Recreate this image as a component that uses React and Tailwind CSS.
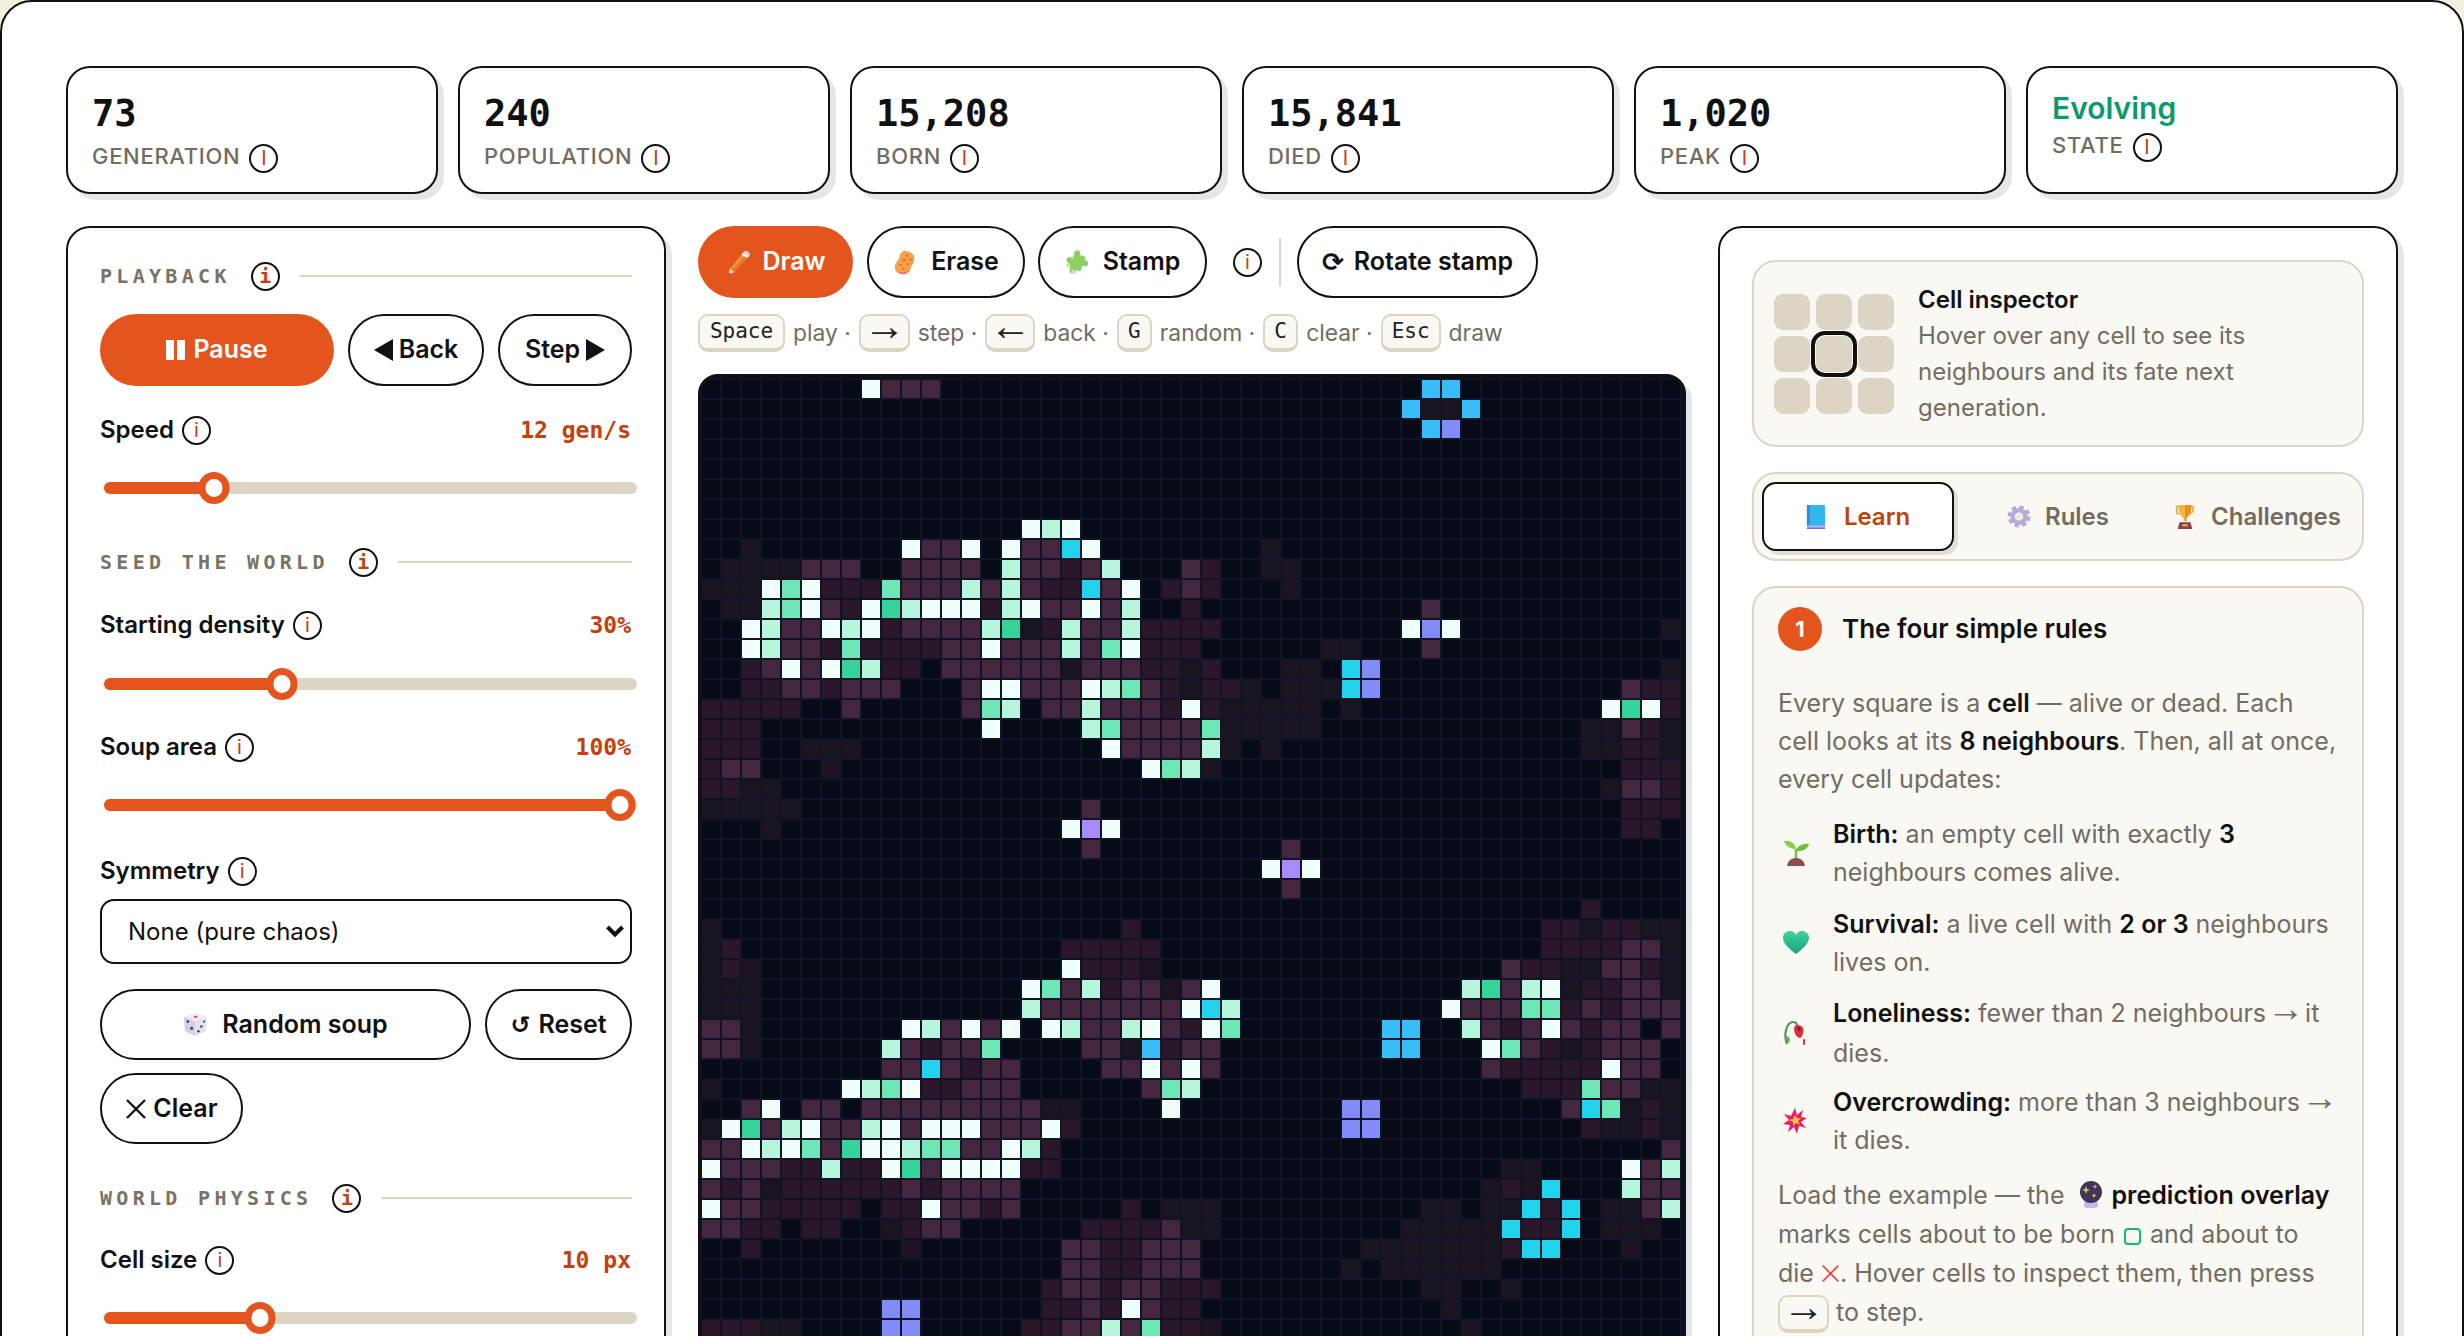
import React from "react";

const MONO = "font-['DejaVu_Sans_Mono',monospace]";
const ARROW = "font-['Liberation_Serif',serif]";

const COLORS = {
  W: "#effffa", L: "#b6f7dc", M: "#6ee7b7", G: "#34d399", C: "#22d3ee", B: "#38bdf8",
  I: "#818cf8", P: "#a78bfa", D: "#45263f", E: "#2a1729", F: "#1a1320",
};

const ROWS = {
  0: "8W 9D 10D 11D|11B 12B",
  1: "|10B 11F 12F 13B",
  2: "|11B 12I",
  7: "16W 17L 18W",
  8: "2F 10W 11D 12D 13W 15W 16D 17D 18C 19W|3F",
  9: "1F 2F 3F 4F 5D 6D 7D 10D 11D 12D 13D 15L 16D 17D 18E 19D 20L 24D|0E 3F 4F",
  10: "0F 1F 2F 3W 4M 5W 6E 7E 8E 9M 10D 11D 12D 13L 14D 15L 16D 17E 18E 19C 20D 21W 23E 24D|0E 4F",
  11: "1F 2F 3L 4M 5W 6D 7E 8W 9G 10L 11W 12W 13W 14E 15L 16W 17D 18D 19W 20D 21L 24E|11D",
  12: "2W 3L 4D 5D 6W 7L 8W 9E 10D 11D 12D 13D 14L 15G 16F 17E 18L 19D 20D 21L 22E 23E 24E|0E 10W 11I 12W 23F",
  13: "2W 3L 4D 5D 6E 7M 8E 9E 10E 11E 12D 13D 14W 15D 16D 17D 18L 19D 20M 21W 22E 23E 24E|6F 7F 11D",
  14: "2E 3D 4W 5D 6W 7G 8L 9E 10E 12D 13D 14D 15D 16D 17D 18F 19D 20D 21D 22E 23E 24F|0E 4F 5F 7C 8I 23F",
  15: "2E 3E 4D 5D 6E 7D 8D 9D 13D 14W 15W 16D 17D 18D 19W 20L 21M 22D 23E 24F|0E 1E 2F 4F 5F 6F 7C 8I 21D 22E 23E",
  16: "0E 1E 2E 3E 4E 7D 13D 14M 15L 17D 18D 19L 20D 21D 22D 23E 24W|0E 1F 2F 3F 4F 5F 7F 20W 21G 22W 23E",
  17: "0E 1E 2E 14W 19L 20M 21D 22D 23D 24D|0M 1F 2F 3F 4F 5F 19F 20F 21D 22E 23F",
  18: "0E 1E 2E 5F 6F 7F 20W 21D 22D 23D 24D|0L 1F 3F 19F 20F 21E 22E 23F",
  19: "0E 1D 2D 6F 22W 23M 24L|0F 21E 22E 23E",
  20: "0E 1E 2F 3F|20F 21D 22D 23E",
  21: "0F 1F 2F 3F 4F 19D|21E 22E 23E",
  22: "3F 18W 19P 20W|21E 22E",
  23: "19D|4D",
  24: "|3W 4P 5W",
  25: "|4D",
  26: "|19E",
  27: "0F 21E|17E 18E 19F 20E 21E 22F 23F",
  28: "0F 1E 18E 19E 20E 21E 22E|17E 18E 19E 20E 21D 22D 23F",
  29: "0F 1E 2F 18W 19E 20E 21E 22F|15D 16E 17E 18F 19F 20D 21D 22E 23F",
  30: "0F 1F 2F 16W 17M 18D 19L 20E 21D 22D 23F 24D|0W 13L 14G 15D 16L 17W 18F 19E 20E 21D 22D 23F",
  31: "0F 1F 2F 16L 17D 18D 19D 20D 21D 22D 23D 24W|0C 1L 12W 13D 14D 15D 16M 17M 18E 19D 20E 21D 22D 23D",
  32: "0D 1D 2F 10W 11L 12D 13W 14D 15W 17W 18L 19D 20D 21L 22W 23D 24E|0W 1M 9B 10B 13L 14D 15E 16D 17W 18D 19E 20D 21D 23D",
  33: "0D 1D 2F 9L 10D 11E 12D 13D 14M 19D 20D 21F 22B 23E 24D|0D 9B 10B 14W 15M 16D 17E 18F 19E 20D 21D 22D",
  34: "9D 10D 11C 12D 13E 14D 15D 20D 21D 22W 23D 24W|0D 14D 15E 16E 17E 18E 19E 20W 21D 22D",
  35: "0F 7W 8L 9M 10W 11E 12E 13D 14D 15D 22D 23M 24L|16E 17E 18E 19M 20D 21D 22F 23F",
  36: "2D 3W 5D 6D 8D 9D 10D 11D 12D 13D 14D 15D 16D 17F 18F 23W|7I 8I 18D 19C 20M 21F 22E 23F",
  37: "0F 1W 2G 3D 4L 5W 6D 7D 8L 9W 10D 11W 12W 13W 14D 15D 16D 17W 18E|7I 8I 19E 20F 21F 22E 23F",
  38: "0D 1D 2W 3L 4W 5M 6D 7G 8W 9W 10L 11M 12M 13D 14D 15W 16L 17E|23D",
  39: "0W 1D 2D 3D 4E 5E 6L 7E 8E 9W 10G 11D 12W 13W 14W 15W 16E 17E|15F 16F 21W 22D 23L",
  40: "0D 1E 2D 3F 4E 5E 6E 7E 8E 9E 10D 11E 12D 13D 14D 15D|14F 15E 16F 17C 21L 22D 23D",
  41: "0W 1D 2D 3E 4E 5E 6E 7E 9E 10E 11W 12D 13D 14E 15D 21E 23F 24F|0F 11F 12F 14F 15F 16C 17E 18C 20F 21F 22D 23L",
  42: "0D 1D 2E 3E 5E 6E 9F 10E 11D 12D 19E 20E 21E 22E 23D 24F|0F 10F 11F 12F 13F 14F 15C 16E 17E 18C 20F 21F 22F",
  43: "2E 10F 18D 19D 20E 21E 22D 23D 24D|8F 9F 10F 11F 12F 13F 14F 15E 16C 17C 21F",
  44: "18D 19D 20E 21E 22D 23D 24D|7F 9F 10F 11F 12F 13F 14F",
  45: "17E 18D 19D 20E 21D 22D 23E 24E|0E 11F 12F 15F",
  46: "9I 10I 17E 18E 19D 20E 21W 22D 23E 24E|12F",
  47: "0E 1E 2E 3F 4F 9I 10I 16E 17E 18D 19D 20L 21D 22M 23E 24E|0F 13F",
};

function cells() {
  const out = [];
  for (const [r, s] of Object.entries(ROWS)) {
    const [a, b = ""] = s.split("|");
    const push = (str, off) => {
      for (const t of str.split(" ")) {
        const m = t.match(/^(\d+)([A-Z])$/);
        if (m) out.push([Number(r), Number(m[1]) + off, COLORS[m[2]]]);
      }
    };
    push(a, 0);
    push(b, 25);
  }
  return out;
}

function LifeGrid() {
  const cols = Array.from({ length: 50 });
  const rows = Array.from({ length: 49 });
  return (
    <svg width="982" height="980" className="block">
      {cols.map((_, i) => (
        <rect key={"v" + i} x={-1 + 20 * i} y="0" width="2" height="980" fill="#0f1427" />
      ))}
      {rows.map((_, i) => (
        <rect key={"h" + i} x="0" y={1 + 20 * i} width="982" height="2" fill="#0f1427" />
      ))}
      {cells().map(([r, c, f]) => (
        <rect key={r + "-" + c} x={1 + 20 * c} y={3 + 20 * r} width="18" height="18" fill={f} />
      ))}
    </svg>
  );
}

function Info({ mono }) {
  return (
    <span
      className={`inline-flex h-[29px] w-[29px] shrink-0 items-center justify-center rounded-full border-2 border-[#111] text-[20px] leading-none tracking-normal text-[#c2410c] ${
        mono ? MONO + " font-bold" : "font-normal"
      }`}
    >
      i
    </span>
  );
}

function Stat({ value, label }) {
  return (
    <div className="h-[128px] rounded-[24px] border-2 border-[#111] bg-white px-[24px] pt-[26px] shadow-[6px_6px_0_rgba(0,0,0,0.1)]">
      <div className={`${MONO} h-[40px] text-[37px] font-bold leading-[40px] text-[#111]`}>{value}</div>
      <div className="mt-[9px] flex h-[30px] items-center gap-[9px] text-[22px] font-medium uppercase tracking-[0.7px] text-[#736c60]">
        <span className="-mt-[3px]">{label}</span>
        <Info />
      </div>
    </div>
  );
}

function StateCard() {
  return (
    <div className="h-[128px] rounded-[24px] border-2 border-[#111] bg-white px-[24px] pt-[20px] shadow-[6px_6px_0_rgba(0,0,0,0.1)]">
      <div className="h-[40px] text-[30px] font-semibold leading-[40px] text-[#0a9a6d]">Evolving</div>
      <div className="mt-[4px] flex h-[30px] items-center gap-[9px] text-[22px] font-medium uppercase tracking-[0.7px] text-[#736c60]">
        <span className="-mt-[3px]">State</span>
        <Info />
      </div>
    </div>
  );
}

function Section({ title, className = "" }) {
  return (
    <div className={`flex h-[32px] items-center gap-[20px] ${className}`}>
      <span className={`${MONO} whitespace-pre text-[20px] font-bold uppercase tracking-[4.3px] text-[#7a7263]`}>{title}</span>
      <Info mono />
      <span className="h-[2px] flex-1 bg-[#ddd5c3]" />
    </div>
  );
}

function Field({ label, value, className = "" }) {
  return (
    <div className={`flex h-[30px] items-center justify-between ${className}`}>
      <span className="flex items-center gap-[8px] text-[24px] font-semibold leading-none text-[#111]">
        {label} <Info />
      </span>
      {value && <span className={`${MONO} -ml-[2px] mr-[1px] whitespace-pre text-[23px] font-bold text-[#c2410c]`}>{value}</span>}
    </div>
  );
}

function Slider({ at, className = "" }) {
  return (
    <div className={`relative ml-[4px] -mr-[5px] flex h-[30px] items-center ${className}`}>
      <div className="h-[12px] w-full rounded-full bg-[#ddd5c3]" />
      <div className="absolute left-0 top-[9px] h-[12px] rounded-full bg-[#e4551e]" style={{ width: at }} />
      <div
        className="absolute top-[-1px] h-[32px] w-[31px] -translate-x-1/2 rounded-full border-[7px] border-[#e4551e] bg-white"
        style={{ left: at }}
      />
    </div>
  );
}

function Btn({ children, className = "" }) {
  return (
    <button className={`flex items-center justify-center rounded-full border-2 border-[#111] bg-white text-[25px] font-semibold text-[#111] ${className}`}>
      {children}
    </button>
  );
}

function Kbd({ children, className = "" }) {
  return (
    <span className={`inline-flex h-[38px] items-center justify-center rounded-[10px] border-2 border-b-[4px] border-[#ddd5c3] bg-[#faf8f3] px-[10px] text-[#222] ${className}`}>
      {children}
    </span>
  );
}

const Tri = ({ left }) => (
  <svg width="19" height="22" viewBox="0 0 19 22">
    <polygon points={left ? "19,0 19,22 0,11" : "0,0 0,22 19,11"} fill="#111" />
  </svg>
);

const XIcon = ({ size = 22, color = "#111", sw = 2.4 }) => (
  <svg width={size} height={size} viewBox="0 0 22 22" fill="none" stroke={color} strokeWidth={sw}>
    <path d="M2 2 L20 20 M20 2 L2 20" />
  </svg>
);

const Pencil = () => (
  <svg width="25" height="25" viewBox="0 0 26 32" preserveAspectRatio="none">
    <path d="M5 24 L18 5 L24 9 L10 28 Z" fill="#f4924c" />
    <path d="M10 28 L24 9 L21 7 L7 26 Z" fill="#e9762f" />
    <path d="M17 6 L20 1.5 Q22 0 24 2 L26 5 Q26 7 25 8 L23 10 Z" fill="#f7c4c4" />
    <path d="M17 6.5 L19 3.5 L25 7.5 L23 10 Z" fill="#fff" opacity=".85" />
    <path d="M5 24 L10 28 L3.5 31.5 Z" fill="#f6d2a8" />
    <path d="M3.8 29 L5.5 30.5 L3.2 31.8 Z" fill="#5b3f6e" />
  </svg>
);

const Sponge = () => (
  <svg width="24" height="25" viewBox="0 0 26 32" preserveAspectRatio="none">
    <path d="M13 1 C19 2 23 5 23 11 C23 17 20 20 19 24 C18 28 15 31 11 31 C6 31 2 27 2 22 C2 16 6 14 7 9 C8 4 10 1 13 1 Z" fill="#f5a14a" />
    <path d="M4 26 C8 30 14 29 18 25 C17 29 14 31 11 31 C8 31 5 29 4 26 Z" fill="#f2737a" />
    <g fill="#d9752a">
      <circle cx="15" cy="7" r="1.4" /><circle cx="19" cy="12" r="1.4" /><circle cx="12" cy="13" r="1.6" />
      <circle cx="16" cy="18" r="1.5" /><circle cx="8" cy="19" r="1.4" /><circle cx="11" cy="24" r="1.3" />
    </g>
  </svg>
);

const PuzzleIcon = () => (
  <svg width="24" height="25" viewBox="0 0 26 30" preserveAspectRatio="none">
    <path d="M11 1 C14 -1 18 2 16 6 L22 8 C23 9 22 12 20 12 C22 11 26 13 25 17 C24 20 21 20 19 19 L17 25 C16 26 13 25 13 23 C14 26 11 30 7 28 C4 27 5 24 6 22 L2 20 C1 18 3 15 5 16 C2 15 0 11 3 9 C5 8 7 9 8 10 L10 5 C10 3 10 2 11 1 Z" fill="#8fcf5f" />
    <path d="M13 23 C14 26 11 30 7 28 C9 27 11 25 13 23 Z M6 22 L2 20 C2 18 4 16 5 16 Z" fill="#cfe8c0" />
    <circle cx="9" cy="26" r="2.4" fill="#cfd8dc" />
  </svg>
);

const Die = () => (
  <svg width="25" height="25" viewBox="0 0 26 26">
    <polygon points="13,1 25,5 13,10 1,5" fill="#efeaf2" />
    <polygon points="1,5 13,10 13,25 2,20" fill="#d5cfe0" />
    <polygon points="25,5 13,10 13,25 24,20" fill="#e6e1ec" />
    <ellipse cx="13" cy="5" rx="2" ry="1.2" fill="#e8436a" />
    <g fill="#4b3a8a">
      <circle cx="5" cy="10" r="1.5" /><circle cx="9" cy="17" r="1.6" /><circle cx="16" cy="20" r="1.4" />
      <circle cx="19" cy="15" r="1.3" /><circle cx="22" cy="10" r="1.2" />
    </g>
  </svg>
);

const Book = () => (
  <svg width="20" height="24" viewBox="0 0 22 34" preserveAspectRatio="none">
    <rect x="1" y="0" width="20" height="30" rx="1.5" fill="#33b5ee" />
    <rect x="1" y="0" width="3" height="30" fill="#2b8fd1" />
    <rect x="1" y="29" width="20" height="4" fill="#b9b4ec" />
    <rect x="1" y="32" width="20" height="2" fill="#6f74d8" />
  </svg>
);

const Gear = () => (
  <svg width="24" height="23" viewBox="0 0 26 26" preserveAspectRatio="none">
    <circle cx="13" cy="13" r="10" fill="none" stroke="#b7aad6" strokeWidth="5" strokeDasharray="4.6 3.25" />
    <circle cx="13" cy="13" r="7" fill="none" stroke="#b7aad6" strokeWidth="5" />
    <circle cx="13" cy="13" r="3" fill="#ece7d8" />
  </svg>
);

const Trophy = () => (
  <svg width="20" height="24" viewBox="0 0 22 36" preserveAspectRatio="none">
    <path d="M2 2 H20 V7 C20 11 17 13 15 13 L2 13 C2 11 2 7 2 2 Z" fill="none" stroke="#f4a93a" strokeWidth="2" />
    <path d="M4 0 H18 C18 8 17 16 12.5 19 V24 H9.5 V19 C5 16 4 8 4 0 Z" fill="#f5b544" />
    <path d="M11 0 H18 C18 8 17 16 12.5 19 V24 H11 Z" fill="#e98f25" />
    <path d="M5 26 H17 L19 36 H3 Z" fill="#8a3d55" />
    <rect x="8" y="29" width="6" height="3" fill="#f5b544" />
  </svg>
);

const Seedling = () => (
  <svg width="26" height="26" viewBox="0 0 26 26">
    <path d="M13 19 V9" stroke="#6fbf3a" strokeWidth="2.4" />
    <path d="M13 9 C8 9 3 7 1 1 C7 0 12 3 13 9 Z" fill="#86d14a" />
    <path d="M13 11 C14 6 20 3 26 4 C25 9 19 12 13 11 Z" fill="#6fbf3a" />
    <path d="M4 26 C5 20 9 18 13 18 C17 18 21 20 22 26 Z" fill="#8f4d4d" />
  </svg>
);

const Heart = () => (
  <svg width="26" height="24" viewBox="0 0 26 24">
    <defs>
      <linearGradient id="hg" x1="0" y1="0" x2="0" y2="1">
        <stop offset="0" stopColor="#3ed39a" />
        <stop offset="1" stopColor="#18a184" />
      </linearGradient>
    </defs>
    <path d="M13 23 C8 19 0 13 0 7 C0 2 4 0 7 0 C10 0 12 2 13 4 C14 2 16 0 19 0 C22 0 26 2 26 7 C26 13 18 19 13 23 Z" fill="url(#hg)" />
  </svg>
);

const Wilted = () => (
  <svg width="24" height="26" viewBox="0 0 24 26">
    <path d="M4 24 C0 14 4 2 10 2 C13 2 14 4 14 6" fill="none" stroke="#4f9a58" strokeWidth="2.2" />
    <path d="M3 16 C6 16 8 19 6 23 C3 22 2 19 3 16 Z" fill="#5fb05e" />
    <path d="M11 8 C12 4 18 4 20 8 C21 12 20 16 17 18 C14 18 11 14 11 8 Z" fill="#d7303f" />
    <path d="M14 7 C16 6 18 8 18 11 C16 12 14 10 14 7 Z" fill="#8f1c2e" />
    <rect x="20" y="19" width="2" height="6" rx="1" fill="#d7303f" />
  </svg>
);

const Boom = () => (
  <svg width="24" height="26" viewBox="0 0 24 26">
    <polygon points="12,0 14,7 20,2 18,9 24,10 18,14 23,20 16,18 14,26 11,19 5,24 7,17 0,16 6,12 1,6 8,8" fill="#ea1f63" />
    <polygon points="12,7 14,10 18,10 15,13 17,17 13,15 10,18 10,14 6,12 10,11" fill="#f9c23c" />
  </svg>
);

const Ball = () => (
  <svg width="24" height="28" viewBox="0 0 24 28">
    <rect x="5" y="20" width="14" height="7" rx="3" fill="#c9b6e8" />
    <circle cx="12" cy="11" r="11" fill="#3f3557" />
    <path d="M7 5 L8 8 L11 9 L8 10 L7 13 L6 10 L3 9 L6 8 Z" fill="#f5c14e" />
    <path d="M16 3 L16.7 5 L18.5 5.6 L16.7 6.2 L16 8 L15.3 6.2 L13.5 5.6 L15.3 5 Z" fill="#e6a3c8" />
    <path d="M15 12 L15.7 14 L17.5 14.6 L15.7 15.2 L15 17 L14.3 15.2 L12.5 14.6 L14.3 14 Z" fill="#f5c14e" />
  </svg>
);

const Arrow = ({ children }) => <span className={`${ARROW} -mx-[6px] align-[1px] text-[37px] leading-[0]`}>{children}</span>;

function Rule({ icon, className = "", children }) {
  return (
    <div className={`flex items-center ${className}`}>
      <span className="flex w-[55px] shrink-0 items-center pl-[5px]">{icon}</span>
      <p>{children}</p>
    </div>
  );
}

const B = ({ children }) => <b className="font-semibold text-[#111]">{children}</b>;

function Inspector() {
  const idx = [0, 1, 2, 3, 4, 5, 6, 7, 8];
  return (
    <div className="flex h-[187px] rounded-[24px] border-2 border-[#ddd5c3] bg-[#faf8f3] pl-[20px] pt-[32px]">
      <div className="grid h-[120px] w-[120px] shrink-0 grid-cols-3 grid-rows-3 gap-[6px]">
        {idx.map((i) => (
          <div
            key={i}
            className={`rounded-[9px] bg-[#ddd5c3] ${i === 4 ? "relative z-10 outline-[4px] outline-[#111] outline-offset-[1px]" : ""}`}
          />
        ))}
      </div>
      <div className="-mt-[12px] ml-[24px]">
        <div className="text-[24px] font-semibold leading-[36px] text-[#111]">Cell inspector</div>
        <div className="text-[24px] leading-[36px] text-[#736c60]">
          Hover over any cell to see its
          <br />
          neighbours and its fate next
          <br />
          generation.
        </div>
      </div>
    </div>
  );
}

function Tabs() {
  return (
    <div className="mt-[25px] grid h-[89px] grid-cols-3 items-center gap-[8px] rounded-[24px] border-2 border-[#ddd5c3] bg-[#faf8f3] px-[8px] text-[24px] font-semibold text-[#736c60]">
      <div className="flex h-[69px] items-center justify-center gap-[18px] rounded-[14px] border-2 border-[#111] bg-white text-[#c2410c] shadow-[4px_4px_0_rgba(0,0,0,0.1)]">
        <Book /> Learn
      </div>
      <div className="flex items-center justify-center gap-[14px]">
        <Gear /> Rules
      </div>
      <div className="flex items-center justify-center gap-[16px]">
        <Trophy /> Challenges
      </div>
    </div>
  );
}

function Lesson() {
  return (
    <div className="mt-[25px] rounded-[24px] border-2 border-[#ddd5c3] bg-[#faf8f3] px-[24px] pb-[40px] pt-[19px] text-[25px] leading-[38px] text-[#736c60]">
      <div className="flex items-center gap-[20px]">
        <span className="flex h-[44px] w-[44px] items-center justify-center rounded-full bg-[#e4551e] text-[22px] font-bold text-white">1</span>
        <span className="text-[26px] font-semibold text-[#111]">The four simple rules</span>
      </div>
      <p className="mt-[33px]">
        Every square is a <B>cell</B> — alive or dead. Each cell looks at its <B>8 neighbours</B>. Then, all at once, every cell updates:
      </p>
      <Rule icon={<Seedling />} className="mt-[17px]">
        <B>Birth:</B> an empty cell with exactly <B>3</B> neighbours comes alive.
      </Rule>
      <Rule icon={<Heart />} className="mt-[14px]">
        <B>Survival:</B> a live cell with <B>2 or 3</B> neighbours lives on.
      </Rule>
      <Rule icon={<Wilted />} className="mt-[12px] leading-[40px]">
        <B>Loneliness:</B> fewer than 2 neighbours <Arrow>→</Arrow> it dies.
      </Rule>
      <Rule icon={<Boom />} className="mt-[10px] whitespace-nowrap">
        <B>Overcrowding:</B> more than 3 neighbours <Arrow>→</Arrow>
        <br />
        it dies.
      </Rule>
      <p className="mt-[17px] leading-[39px]">
        Load the example — the <span className="mx-[8px] inline-block align-[-5px]"><Ball /></span>
        <B>prediction overlay</B> marks cells about to be born{" "}
        <span className="mx-[2px] inline-block h-[17px] w-[17px] rounded-[4px] border-2 border-[#10b981] align-[-2px]" /> and about to die{" "}
        <span className="inline-block align-[-1px]"><XIcon size={19} color="#ef4444" sw={2} /></span>. Hover cells to inspect them, then press{" "}
        <Kbd className={`${ARROW} w-[51px] pb-[12px] align-middle text-[42px] leading-[0]`}>→</Kbd> to step.
      </p>
    </div>
  );
}

export default function App() {
  return (
    <div className="h-[1336px] overflow-hidden bg-[#f5efe2] font-['Inter',sans-serif]">
      <div className="h-[1500px] rounded-[32px] border-2 border-[#111] bg-white p-[64px]">
        <div className="grid grid-cols-6 gap-[20px]">
          <Stat value="73" label="Generation" />
          <Stat value="240" label="Population" />
          <Stat value="15,208" label="Born" />
          <Stat value="15,841" label="Died" />
          <Stat value="1,020" label="Peak" />
          <StateCard />
        </div>

        <div className="mt-[32px] grid grid-cols-[600px_988px_680px] gap-[32px]">
          <aside className="h-[1300px] rounded-[24px] border-2 border-[#111] bg-white px-[32px] pt-[32px] shadow-[6px_6px_0_rgba(0,0,0,0.1)]">
            <Section title="Playback" />
            <div className="mt-[22px] flex gap-[14px]">
              <button className="flex h-[72px] flex-1 items-center justify-center gap-[8px] rounded-full bg-[#e4551e] text-[25px] font-semibold text-white">
                <span className="flex gap-[3px]">
                  <span className="h-[20px] w-[8px] bg-white" />
                  <span className="h-[20px] w-[8px] bg-white" />
                </span>
                Pause
              </button>
              <Btn className="h-[72px] w-[136px] gap-[6px]"><Tri left /> Back</Btn>
              <Btn className="h-[72px] w-[134px] gap-[6px]">Step <Tri /></Btn>
            </div>
            <Field label="Speed" value="12 gen/s" className="mt-[29px]" />
            <Slider at={110} className="mt-[28px]" />

            <Section title="Seed the world" className="mt-[43px]" />
            <Field label="Starting density" value="30%" className="mt-[32px]" />
            <Slider at={178} className="mt-[29px]" />
            <Field label="Soup area" value="100%" className="mt-[33px]" />
            <Slider at={516} className="mt-[28px]" />
            <Field label="Symmetry" className="mt-[36px]" />
            <div className="relative mt-[13px]">
              <select
                defaultValue="none"
                className="h-[65px] w-full appearance-none rounded-[14px] border-2 border-[#111] bg-white pl-[26px] text-[24px] text-[#111]"
              >
                <option value="none">None (pure chaos)</option>
              </select>
              <svg className="pointer-events-none absolute right-[8px] top-[26px]" width="18" height="12" viewBox="0 0 18 12" fill="none" stroke="#111" strokeWidth="4">
                <path d="M1.5 2 L9 9.5 L16.5 2" />
              </svg>
            </div>
            <div className="mt-[25px] flex gap-[14px]">
              <Btn className="h-[71px] flex-1 gap-[14px]"><Die /> Random soup</Btn>
              <Btn className="h-[71px] w-[147px] gap-[8px]">
                <span className="font-['DejaVu_Sans',sans-serif] text-[24px]">↺</span> Reset
              </Btn>
            </div>
            <Btn className="mt-[13px] h-[71px] w-[143px] gap-[6px]"><XIcon /> Clear</Btn>

            <Section title="World physics" className="mt-[38px]" />
            <Field label="Cell size" value="10 px" className="mt-[31px]" />
            <Slider at={156} className="mt-[28px]" />
          </aside>

          <main>
            <div className="flex h-[72px] items-center">
              <button className="flex h-[72px] w-[155px] items-center justify-center gap-[12px] rounded-full bg-[#e4551e] text-[25px] font-semibold text-white">
                <Pencil /> Draw
              </button>
              <Btn className="ml-[14px] h-[72px] w-[158px] gap-[14px]"><Sponge /> Erase</Btn>
              <Btn className="ml-[13px] h-[72px] w-[169px] gap-[14px]"><PuzzleIcon /> Stamp</Btn>
              <span className="ml-[26px]"><Info /></span>
              <span className="ml-[17px] h-[48px] w-[2px] bg-[#ddd5c3]" />
              <Btn className="ml-[16px] h-[72px] w-[241px] gap-[10px]">
                <span className="font-['DejaVu_Sans',sans-serif] text-[26px]">⟳</span> Rotate stamp
              </Btn>
            </div>
            <div className="mt-[16px] flex items-center gap-[8px] text-[22.8px] text-[#736c60]">
              <Kbd className={`${MONO} w-[87px] text-[21px]`}>Space</Kbd>
              <span>play ·</span>
              <Kbd className={`${ARROW} w-[51px] pb-[12px] text-[42px] leading-[0]`}>→</Kbd>
              <span>step ·</span>
              <Kbd className={`${ARROW} w-[50px] pb-[12px] text-[42px] leading-[0]`}>←</Kbd>
              <span>back ·</span>
              <Kbd className={`${MONO} w-[35px] px-0 text-[21px]`}>G</Kbd>
              <span>random ·</span>
              <Kbd className={`${MONO} w-[35px] px-0 text-[21px]`}>C</Kbd>
              <span>clear ·</span>
              <Kbd className={`${MONO} w-[60px] px-0 text-[21px]`}>Esc</Kbd>
              <span>draw</span>
            </div>
            <div className="mt-[22px] h-[1000px] overflow-hidden rounded-[20px] border-[3px] border-[#111] bg-[#070b17] shadow-[6px_6px_0_rgba(0,0,0,0.1)]">
              <LifeGrid />
            </div>
          </main>

          <aside className="h-[1300px] rounded-[24px] border-2 border-[#111] bg-white px-[32px] pt-[32px] shadow-[6px_6px_0_rgba(0,0,0,0.1)]">
            <Inspector />
            <Tabs />
            <Lesson />
          </aside>
        </div>
      </div>
    </div>
  );
}
